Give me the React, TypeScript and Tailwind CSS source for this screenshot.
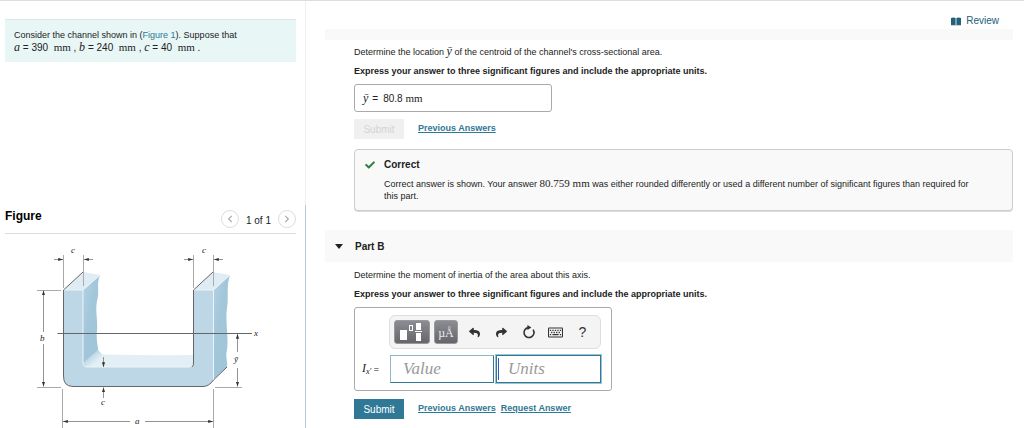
import * as React from 'react';
import { FaCheck, FaChevronLeft, FaChevronRight, FaRegKeyboard, FaReply, FaShare } from 'react-icons/fa';

function MathVar({ children }: { children: React.ReactNode }) {
  return <i className="font-['Liberation_Serif',serif] text-[12px] leading-none">{children}</i>;
}

function Unit({ children }: { children: React.ReactNode }) {
  return <span className="font-['Liberation_Serif',serif] text-[11px] leading-none">{children}</span>;
}

function BookIcon() {
  return (
    <svg width="10" height="9" viewBox="0 0 10 9" fill="#23607a" aria-hidden="true">
      <path d="M0 1 Q2.4 0 4.6 1 V8 H0Z" />
      <path d="M5.4 1 Q7.6 0 10 1 V8 H5.4Z" />
      <path d="M0 8.4 H10" stroke="#8fb0bf" strokeWidth="0.6" />
    </svg>
  );
}

function ResetIcon() {
  return (
    <svg width="14" height="14" viewBox="0 0 14 14" aria-hidden="true">
      <path d="M11.1 4.6 A5 5 0 1 1 6 2.6" fill="none" stroke="#333" strokeWidth="1.6" />
      <path d="M5.4 0 L9.4 2.5 L5.4 5Z" fill="#333" />
    </svg>
  );
}

function TemplateIcon() {
  return (
    <svg width="26" height="20" viewBox="0 0 26 20" fill="#fff" aria-hidden="true" className="shrink-0">
      <rect x="1" y="8" width="7" height="10" />
      <rect x="10.5" y="3.5" width="3" height="5" fill="none" stroke="#fff" />
      <rect x="17" y="1" width="5" height="7" />
      <rect x="16" y="9" width="7" height="1" />
      <rect x="17" y="11" width="5" height="8" />
    </svg>
  );
}

function ChannelFigure() {
  return (
    <svg
      className="block w-full"
      viewBox="5 240 291 188"
      role="img"
      aria-label="Cross section of the channel"
      fontFamily="'Liberation Serif', serif"
      fontStyle="italic"
      fontSize="9"
    >
      <defs>
        <marker id="arrow" viewBox="0 0 6 4" refX="6" refY="2" markerWidth="6" markerHeight="5" orient="auto-start-reverse">
          <path d="M0 0 L6 2 L0 4Z" fill="#333" />
        </marker>
        <linearGradient id="side" x1="0" y1="0" x2="1" y2="1">
          <stop offset="0" stopColor="#b3d2e1" />
          <stop offset="0.4" stopColor="#a2c7da" />
          <stop offset="1" stopColor="#9fc4d8" />
        </linearGradient>
        <linearGradient id="fillet" x1="85" y1="350" x2="99" y2="366" gradientUnits="userSpaceOnUse">
          <stop offset="0.2" stopColor="#a2c7da" />
          <stop offset="0.5" stopColor="#c9dfea" />
          <stop offset="0.8" stopColor="#e4eff5" />
        </linearGradient>
      </defs>

      {/* left and right flanges, inner side faces */}
      <path d="M83 290 L100 275 C96 285 100 292 97 301 C95 311 98 320 97 330 C96 340 98 345 98 350 L102 355 L88 367 H83Z" fill="url(#side)" />
      <path d="M213 290 L230 275 C226 287 229 296 227 308 C225 322 229 338 227 350 C225 356 228 361 227 367 L213 380Z" fill="url(#side)" />
      <path d="M63.5 290 L83 272 L100 275 L83 290Z" fill="#e0ecf4" />
      <path d="M193.5 290 L213 272 L230 275 L213 290Z" fill="#e0ecf4" />

      {/* web */}
      <path d="M98 353 Q101 355 105 354.5 Q150 355.5 193.5 355 V367 H86Z" fill="#e4eff5" />
      <path d="M83 363 L98 350 Q99 354 104 355 L90 367 H86Z" fill="url(#fillet)" />

      {/* front face */}
      <path d="M63.5 290 H83 V363 Q83 367 87 367 H190 Q193.5 367 193.5 363 V290 H213.5 V380 Q209 386.5 203 386.5 H73 Q63.5 386.5 63.5 376Z" fill="#bed7e6" />
      <path d="M64 290 H83 V363 Q83 367 87 367 H190 M194 290 H213.5 V380 M83 290 L100 275 M213.5 290 L230 275" fill="none" stroke="#eaf4f9" />
      <path d="M83 272 L63.5 290 V376 Q63.5 386.5 73 386.5 H203 Q209 386.5 213.5 380 L227 367 M213 272 L193.5 290 V363 Q193.5 366 192 367" fill="none" stroke="#666" />

      {/* x axis */}
      <path d="M57.5 333.5 H252" stroke="#666" />

      {/* extension lines */}
      <path
        d="M63.5 255 V288 M83.5 255 V286 M193.5 255 V288 M213.5 255 V286 M37 290.5 H61 M37 387.5 H61 M215 387.5 H242 M62.5 389 V428 M213.5 389 V428"
        stroke="#aaa"
      />

      {/* dimension arrows */}
      <g stroke="#777" strokeWidth="0.8">
        <path d="M54 259.5 H63" markerEnd="url(#arrow)" />
        <path d="M93 259.5 H84" markerEnd="url(#arrow)" />
        <path d="M184 259.5 H193" markerEnd="url(#arrow)" />
        <path d="M223 259.5 H214" markerEnd="url(#arrow)" />
        <path d="M43.5 332 V290.5" markerEnd="url(#arrow)" />
        <path d="M43.5 344 V386.5" markerEnd="url(#arrow)" />
        <path d="M237.5 352 V334" markerEnd="url(#arrow)" />
        <path d="M237.5 368 V386.5" markerEnd="url(#arrow)" />
        <path d="M103.5 357 V367" markerEnd="url(#arrow)" />
        <path d="M103.5 398 V387.5" markerEnd="url(#arrow)" />
        <path d="M130 421.5 H63" markerEnd="url(#arrow)" />
        <path d="M145 421.5 H213" markerEnd="url(#arrow)" />
      </g>

      <g fill="#222">
        <text x="71" y="253">c</text>
        <text x="202" y="253">c</text>
        <text x="40" y="341">b</text>
        <text x="254" y="336">x</text>
        <text x="234" y="362">ȳ</text>
        <text x="101" y="405">c</text>
        <text x="135" y="424">a</text>
      </g>
    </svg>
  );
}

function PageButton({ label, children }: { label: string; children: React.ReactNode }) {
  return (
    <button
      type="button"
      aria-label={label}
      className="flex size-[18px] items-center justify-center rounded-full border border-[#ddd] bg-white text-[8px] text-[#aaa]"
    >
      {children}
    </button>
  );
}

function TextLink({ children }: { children: React.ReactNode }) {
  return (
    <a href="#" className="text-[9px] font-bold text-[#2f7896] underline">
      {children}
    </a>
  );
}

function ToolButton({ label, children }: { label: string; children: React.ReactNode }) {
  return (
    <button type="button" aria-label={label} className="flex w-[27px] items-center justify-center text-[14px] leading-none">
      {children}
    </button>
  );
}

function Toolbar() {
  return (
    <div className="flex h-[34px] items-center rounded-md border border-[#ddd] bg-[#f4f4f4] pl-1 text-[#333]">
      <button type="button" aria-label="Templates" className="flex h-6 w-9 items-center justify-center rounded-[3px] border border-[#999] bg-gradient-to-b from-[#8c8c94] to-[#66666a]">
        <TemplateIcon />
      </button>
      <button type="button" aria-label="Symbols" className="mr-[3px] ml-1 h-6 w-6 rounded-[3px] border border-[#999] bg-gradient-to-b from-[#8c8c94] to-[#66666a] font-['Liberation_Serif',serif] text-[12px] leading-6 text-[#eee]">
        µÅ
      </button>
      <ToolButton label="Undo"><FaReply size={11} /></ToolButton>
      <ToolButton label="Redo"><FaShare size={11} /></ToolButton>
      <ToolButton label="Reset"><ResetIcon /></ToolButton>
      <ToolButton label="Keyboard shortcuts"><FaRegKeyboard size={15} /></ToolButton>
      <ToolButton label="Help">?</ToolButton>
    </div>
  );
}

export default function App() {
  const [value, setValue] = React.useState('');
  const [units, setUnits] = React.useState('');

  return (
    <div className="flex min-h-screen border-t border-[#ddd] bg-white font-['Liberation_Sans',Arial,sans-serif] text-[9px] text-[#222]">
      <aside className="flex w-[306px] shrink-0 flex-col">
        <section className="h-[204px] border-r border-[#eee] pt-[18px] pr-[9px] pl-[5px]">
          <div className="border-t border-[#dbe8e8] bg-[#e8f6f6] px-[9px] pt-[9px] pb-2 leading-[12px]">
            <p className="whitespace-nowrap">
              Consider the channel shown in (<a href="#" className="text-[#2f7896]">Figure 1</a>). Suppose that
            </p>
            <p className="text-[10px] leading-[12px] whitespace-nowrap">
              <MathVar>a</MathVar> = 390 &nbsp;<Unit>mm</Unit> , <MathVar>b</MathVar> = 240 &nbsp;<Unit>mm</Unit> , <MathVar>c</MathVar> = 40 &nbsp;<Unit>mm</Unit> .
            </p>
          </div>
        </section>

        <section className="grow border-r border-[#b9c9de] pr-[9px] pl-[5px]">
          <div className="flex h-[29px] items-center border-b border-[#ddd]">
            <h2 className="grow pb-[6px] text-[12px] font-bold text-black">Figure</h2>
            <PageButton label="Previous figure"><FaChevronLeft /></PageButton>
            <span className="px-[7px] pt-[2px] text-[10px]">1 of 1</span>
            <PageButton label="Next figure"><FaChevronRight /></PageButton>
          </div>
          <div className="pt-[6px]">
            <ChannelFigure />
          </div>
        </section>
      </aside>

      <main className="min-w-0 grow pr-[11px] pl-[19px]">
        <div className="flex h-7 items-end justify-end pr-[14px] pb-[2px]">
          <a href="#" className="flex items-center gap-[5px] text-[10px] leading-[12px] text-[#23607a]">
            <BookIcon />
            Review
          </a>
        </div>
        <div className="h-[11px] bg-[#f9f9f9]" />

        <section className="pl-[29px]">
          <p className="pt-[5px] leading-[12px]">
            Determine the location <MathVar>ȳ</MathVar> of the centroid of the channel's cross-sectional area.
          </p>
          <p className="pt-[7px] leading-[12px] font-bold">
            Express your answer to three significant figures and include the appropriate units.
          </p>
          <div className="mt-[7px] flex h-7 w-[198px] items-center gap-1 rounded-[3px] border border-[#aaa] px-2 text-[10px]">
            <MathVar>ȳ</MathVar> =
            <span className="pl-px">80.8 <Unit>mm</Unit></span>
          </div>
          <div className="mt-[7px] flex items-center gap-[14px]">
            <button type="button" disabled className="h-5 w-[50px] bg-[#f0f0f0] text-[10px] text-[#d4d4d4]">Submit</button>
            <TextLink>Previous Answers</TextLink>
          </div>

          <div className="mt-[10px] flex gap-[9px] rounded-[4px] border border-[#ccc] bg-[#f9f9f9] p-[9px] pb-2 pl-[10px] shadow-[0_1px_0_#ddd]">
            <FaCheck size={10} className="mt-[1px] shrink-0 text-[#2e7d3a]" />
            <div>
              <h3 className="text-[10px] leading-[12px] font-bold">Correct</h3>
              <p className="pt-[7px] leading-[12px]">
                Correct answer is shown. Your answer <Unit>80.759 mm</Unit> was either rounded differently or used a different number of significant figures than required for
                <br />
                this part.
              </p>
            </div>
          </div>
        </section>

        <button type="button" aria-expanded="true" className="mt-[19px] flex h-8 w-full items-center gap-3 bg-[#f9f9f9] pl-[10px] text-[10px] font-bold">
          <svg width="8" height="5" viewBox="0 0 8 5" aria-hidden="true">
            <path d="M0 0 H8 L4 5Z" fill="#222" />
          </svg>
          Part B
        </button>

        <section className="pl-[29px]">
          <p className="pt-[7px] leading-[12px]">Determine the moment of inertia of the area about this axis.</p>
          <p className="pt-[7px] leading-[12px] font-bold">
            Express your answer to three significant figures and include the appropriate units.
          </p>
          <div className="mt-[7px] w-[258px] rounded-[3px] border border-[#aaa] pt-[7px] pr-[10px] pb-[7px] pl-[7px]">
            <div className="pl-[27px]">
              <Toolbar />
            </div>
            <div className="mt-[6px] flex items-center">
              <span className="w-[28px] shrink-0 whitespace-nowrap">
                <MathVar>I</MathVar>
                <sub className="font-['Liberation_Serif',serif] text-[8px] italic">x′</sub> =
              </span>
              <input
                aria-label="Value"
                placeholder="Value"
                value={value}
                onChange={(e) => setValue(e.target.value)}
                className="h-7 w-[104px] shrink-0 border border-t-[#8db8ca] border-r-[#2f7896] border-b-[#2f7896] border-l-[#8db8ca] pl-3 font-['Liberation_Serif',serif] text-[17px] italic placeholder:text-[#999]"
              />
              <div className="relative ml-[2px] grow">
                <input
                  aria-label="Units"
                  placeholder="Units"
                  value={units}
                  onChange={(e) => setUnits(e.target.value)}
                  className="block h-7 w-full border border-[#2f7896] pl-[11px] font-['Liberation_Serif',serif] text-[17px] italic outline-1 outline-[#9cc3d3] placeholder:text-[#999]"
                />
                <span className="absolute top-[3px] left-[2px] h-[22px] w-px bg-[#3455c8]" />
              </div>
            </div>
          </div>
          <div className="mt-2 flex items-center">
            <button type="button" className="mr-[14px] h-5 w-[50px] bg-[#2f7896] text-[10px] text-white">Submit</button>
            <TextLink>Previous Answers</TextLink>
            <span className="w-[5px]" />
            <TextLink>Request Answer</TextLink>
          </div>
        </section>
      </main>
    </div>
  );
}
